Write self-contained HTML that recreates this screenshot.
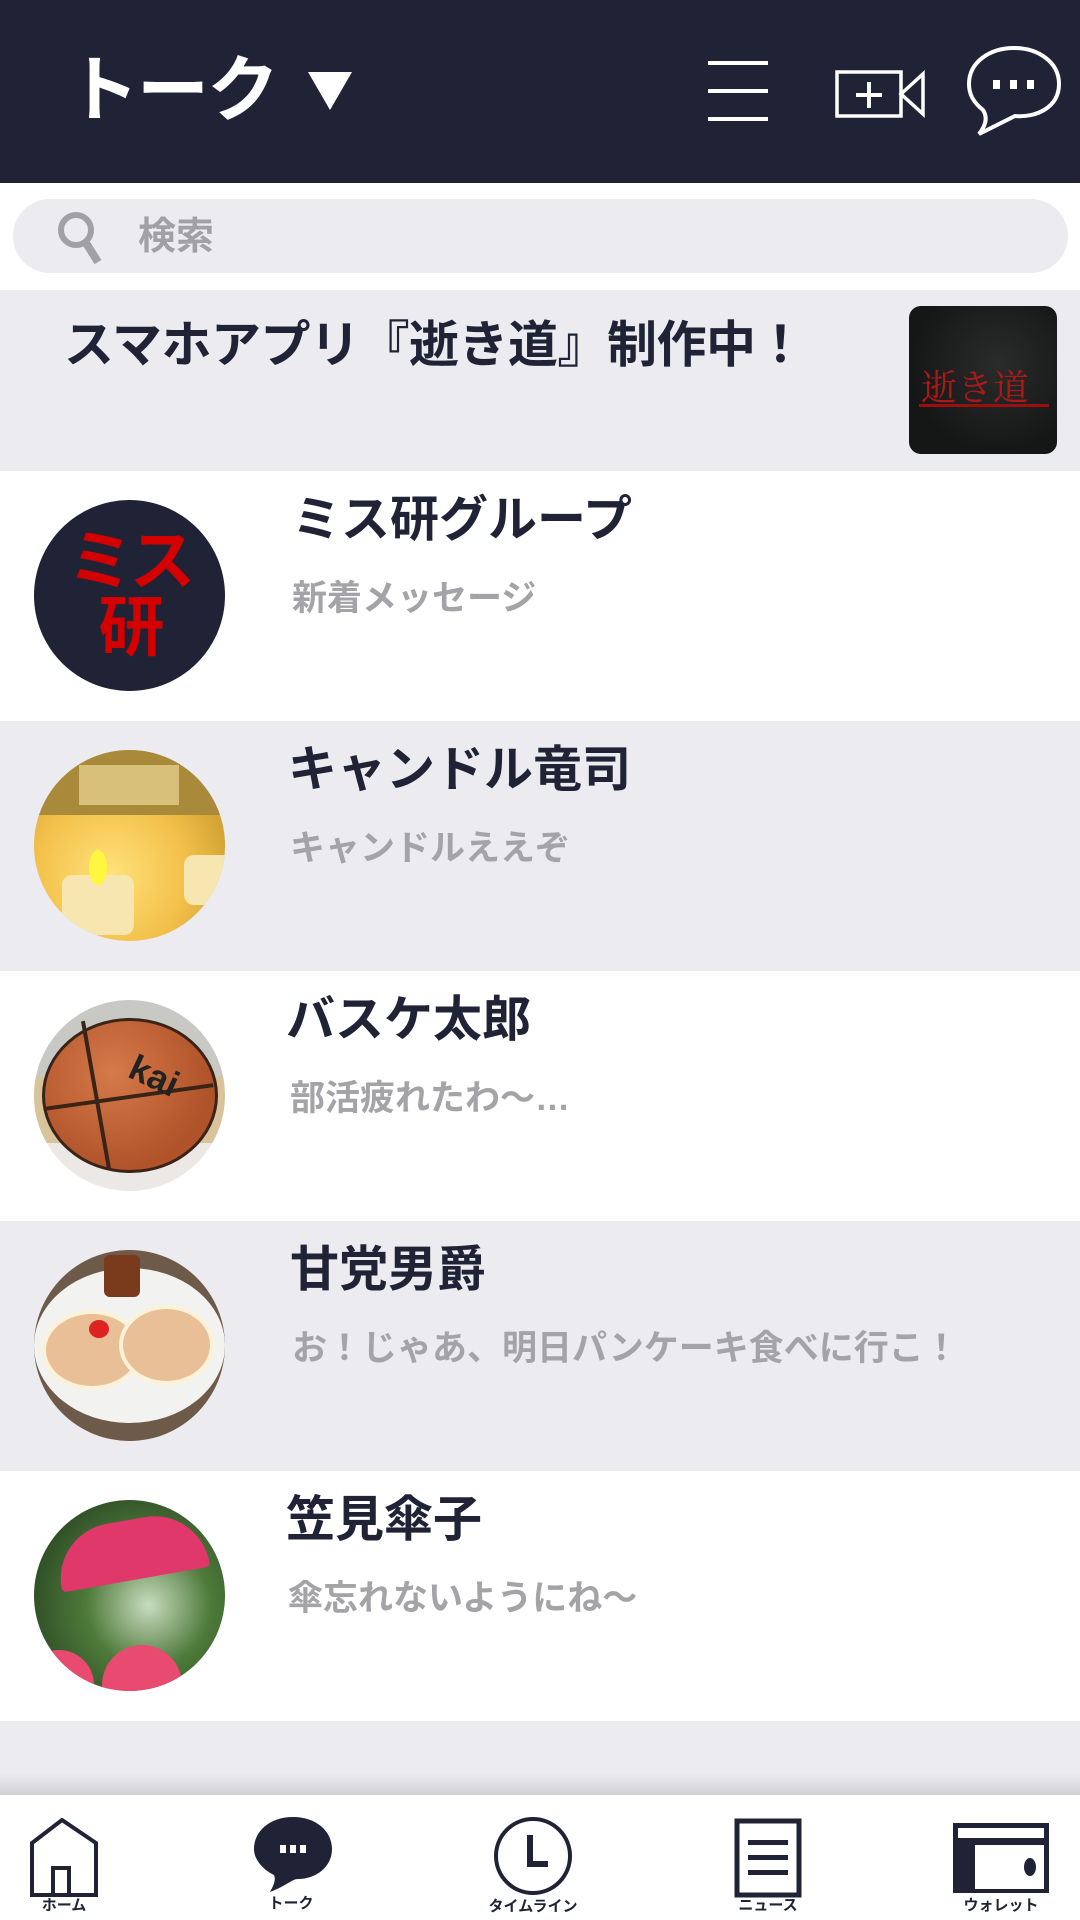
<!DOCTYPE html>
<html><head><meta charset="utf-8"><style>
*{margin:0;padding:0;box-sizing:border-box}
body{width:1080px;height:1920px;position:relative;overflow:hidden;background:#fff;font-family:"Liberation Sans","Noto Sans CJK JP",sans-serif;font-weight:bold;color:#1f2335}
.a{position:absolute}
.hdr{left:0;top:0;width:1080px;height:183px;background:#1f2335}
.row{left:0;width:1080px;height:250px}
.g{background:#ebebf0}
.av{position:absolute;left:34px;top:29px;width:191px;height:191px;border-radius:50%;overflow:hidden}
.nm{position:absolute;left:292px;top:22px;font-size:49px;line-height:54px;white-space:nowrap}
.ms{position:absolute;left:292px;top:108px;font-size:35px;line-height:40px;color:#a3a3a8;white-space:nowrap}
.nav{position:absolute;font-size:15px;line-height:16px;transform:translateX(-50%);white-space:nowrap;color:#1f2335}
</style></head><body>
<div class="a hdr"></div>
<div class="a" style="left:67px;top:48px;font-size:72px;line-height:86px;color:#fff;letter-spacing:-2px">トーク</div>
<svg class="a" style="left:306px;top:70px" width="48" height="42"><polygon points="2,2 46,2 24,40" fill="#fff"/></svg>
<svg class="a" style="left:706px;top:58px" width="64" height="66"><rect x="2" y="3" width="60" height="4" fill="#fff"/><rect x="2" y="31" width="60" height="4" fill="#fff"/><rect x="2" y="59" width="60" height="4" fill="#fff"/></svg>
<svg class="a" style="left:833px;top:64px" width="96" height="56" fill="none" stroke="#fff" stroke-width="3.5"><rect x="4" y="8" width="64" height="44"/><path d="M68 30 L90 10 V50 Z"/><path d="M36 18 V44 M23 31 H49" stroke-width="4"/></svg>
<svg class="a" style="left:965px;top:44px" width="98" height="94" fill="none" stroke="#fff" stroke-width="4"><path d="M49 4 C73 4 94 18 94 40 C94 64 70 74 50 72 L14 90 C22 80 22 72 18 66 C8 58 4 50 4 40 C4 18 25 4 49 4 Z"/><rect x="28" y="36" width="7" height="9" fill="#fff" stroke="none"/><rect x="45" y="36" width="7" height="9" fill="#fff" stroke="none"/><rect x="62" y="36" width="7" height="9" fill="#fff" stroke="none"/></svg>

<div class="a" style="left:13px;top:199px;width:1055px;height:74px;border-radius:37px;background:#ebebf0"></div>
<svg class="a" style="left:56px;top:210px" width="48" height="56" fill="none" stroke="#a0a0a6" stroke-width="6"><circle cx="20" cy="20" r="15"/><path d="M30 33 L42 52" stroke-width="8"/></svg>
<div class="a" style="left:138px;top:215px;font-size:38px;line-height:44px;color:#a0a0a6">検索</div>

<div class="a g" style="left:0;top:290px;width:1080px;height:181px"></div>
<div class="a" style="left:64px;top:316px;font-size:50px;line-height:58px;white-space:nowrap;letter-spacing:-0.5px">スマホアプリ『逝き道』制作中！</div>
<div class="a" style="left:909px;top:306px;width:148px;height:148px;border-radius:12px;background:radial-gradient(circle at 60% 40%,#2a2c2c,#151616 70%);overflow:hidden"><div style="position:absolute;left:12px;top:54px;font-size:36px;color:#b01818;font-weight:normal;font-family:'Noto Serif CJK SC',serif">逝き道</div><div style="position:absolute;left:10px;top:98px;width:130px;height:3px;background:#9a1010"></div></div>

<div class="a row" style="top:471px">
<div class="av" style="background:#1f2335"><div style="position:absolute;left:0;width:191px;top:28px;text-align:center;color:#d40000;font-size:66px;line-height:66px;letter-spacing:-4px">ミス<br>研</div></div>
<div class="nm">ミス研グループ</div><div class="ms">新着メッセージ</div></div>

<div class="a row g" style="top:721px">
<div class="av" style="background:radial-gradient(circle at 40% 65%,#ffe27a,#f3c04a 45%,#c99a2e 80%)"><div style="position:absolute;left:0;top:0;width:191px;height:65px;background:#a88a3a"></div><div style="position:absolute;left:45px;top:15px;width:100px;height:40px;background:#d8c07a"></div><div style="position:absolute;left:28px;top:125px;width:72px;height:60px;border-radius:10px;background:#f7e6b0"></div><div style="position:absolute;left:55px;top:100px;width:18px;height:35px;border-radius:50%;background:#fff640"></div><div style="position:absolute;left:150px;top:105px;width:50px;height:50px;border-radius:10px;background:#f7e6b0"></div></div>
<div class="nm" style="left:288px">キャンドル竜司</div><div class="ms" style="left:290px">キャンドルええぞ</div></div>

<div class="a row" style="top:971px">
<div class="av" style="background:linear-gradient(#c8c8c4 0 40%,#d9c39a 40% 75%,#ebe8e6 75%)"><div style="position:absolute;left:8px;top:18px;width:176px;height:155px;border-radius:50%;background:radial-gradient(circle at 40% 35%,#d57a4a,#b0522a 70%);border:3px solid #3a2418"></div><div style="position:absolute;left:60px;top:20px;width:4px;height:150px;background:#3a2418;transform:rotate(-10deg)"></div><div style="position:absolute;left:10px;top:95px;width:170px;height:4px;background:#3a2418;transform:rotate(-8deg)"></div><div style="position:absolute;left:95px;top:55px;color:#222;font-size:36px;transform:rotate(25deg)">kai</div></div>
<div class="nm" style="left:286px">バスケ太郎</div><div class="ms" style="left:290px">部活疲れたわ〜…</div></div>

<div class="a row g" style="top:1221px">
<div class="av" style="background:#6e5a48"><div style="position:absolute;left:0;top:18px;width:191px;height:155px;border-radius:50%;background:#f2f2f0"></div><div style="position:absolute;left:8px;top:60px;width:100px;height:80px;border-radius:50%;background:#e9bf98;border:4px solid #fbf2d8"></div><div style="position:absolute;left:85px;top:55px;width:95px;height:80px;border-radius:50%;background:#e9bf98;border:4px solid #fbf2d8"></div><div style="position:absolute;left:70px;top:5px;width:36px;height:42px;border-radius:6px;background:#7a3a1c"></div><div style="position:absolute;left:55px;top:70px;width:20px;height:18px;border-radius:50%;background:#d22"></div></div>
<div class="nm" style="left:290px">甘党男爵</div><div class="ms" style="left:292px">お！じゃあ、明日パンケーキ食べに行こ！</div></div>

<div class="a row" style="top:1471px">
<div class="av" style="background:radial-gradient(circle at 60% 55%,#c9dcc0,#4e7a3a 40%,#2c4a24 80%)"><div style="position:absolute;left:22px;top:20px;width:150px;height:60px;border-radius:75px 75px 6px 6px;background:#e0386a;transform:rotate(-10deg)"></div><div style="position:absolute;left:-10px;top:150px;width:70px;height:40px;border-radius:35px 35px 4px 4px;background:#e84a70"></div><div style="position:absolute;left:68px;top:145px;width:80px;height:50px;border-radius:40px 40px 4px 4px;background:#e84a70"></div></div>
<div class="nm" style="left:286px">笠見傘子</div><div class="ms" style="left:288px">傘忘れないようにね〜</div></div>

<div class="a g" style="left:0;top:1721px;width:1080px;height:74px;background:linear-gradient(#ebebf0 0 70%,#d2d2d6)"></div>

<svg class="a" style="left:29px;top:1818px" width="70" height="80" fill="none" stroke="#1f2335" stroke-width="4"><path d="M3 77 V25 L33 2 L67 25 V77 Z"/><rect x="24" y="50" width="16" height="27" stroke-width="4"/></svg>
<div class="nav" style="left:64px;top:1898px">ホーム</div>
<svg class="a" style="left:252px;top:1815px" width="82" height="80"><path d="M41 2 C64 2 80 16 80 34 C80 52 64 64 46 64 C40 64 36 70 18 77 C22 70 24 64 22 60 C10 54 2 44 2 34 C2 16 18 2 41 2 Z" fill="#1f2335"/><rect x="28" y="30" width="6" height="8" fill="#fff"/><rect x="38" y="30" width="6" height="8" fill="#fff"/><rect x="48" y="30" width="6" height="8" fill="#fff"/></svg>
<div class="nav" style="left:291px;top:1896px">トーク</div>
<svg class="a" style="left:493px;top:1815px" width="80" height="82" fill="none" stroke="#1f2335" stroke-width="4"><circle cx="40" cy="41" r="37"/><path d="M37 20 V49 H55" stroke-width="6"/></svg>
<div class="nav" style="left:533px;top:1899px">タイムライン</div>
<svg class="a" style="left:734px;top:1818px" width="68" height="80"><rect x="3" y="3" width="62" height="74" fill="none" stroke="#1f2335" stroke-width="5"/><rect x="14" y="22" width="40" height="5" fill="#1f2335"/><rect x="14" y="37" width="40" height="5" fill="#1f2335"/><rect x="14" y="52" width="40" height="5" fill="#1f2335"/></svg>
<div class="nav" style="left:768px;top:1898px">ニュース</div>
<svg class="a" style="left:953px;top:1823px" width="96" height="72"><rect x="0" y="0" width="96" height="70" fill="#1f2335"/><rect x="5" y="5" width="86" height="10" fill="#fff"/><rect x="22" y="22" width="69" height="44" fill="#fff"/><ellipse cx="77" cy="44" rx="6" ry="9" fill="#1f2335"/></svg>
<div class="nav" style="left:1001px;top:1898px">ウォレット</div>
</body></html>
